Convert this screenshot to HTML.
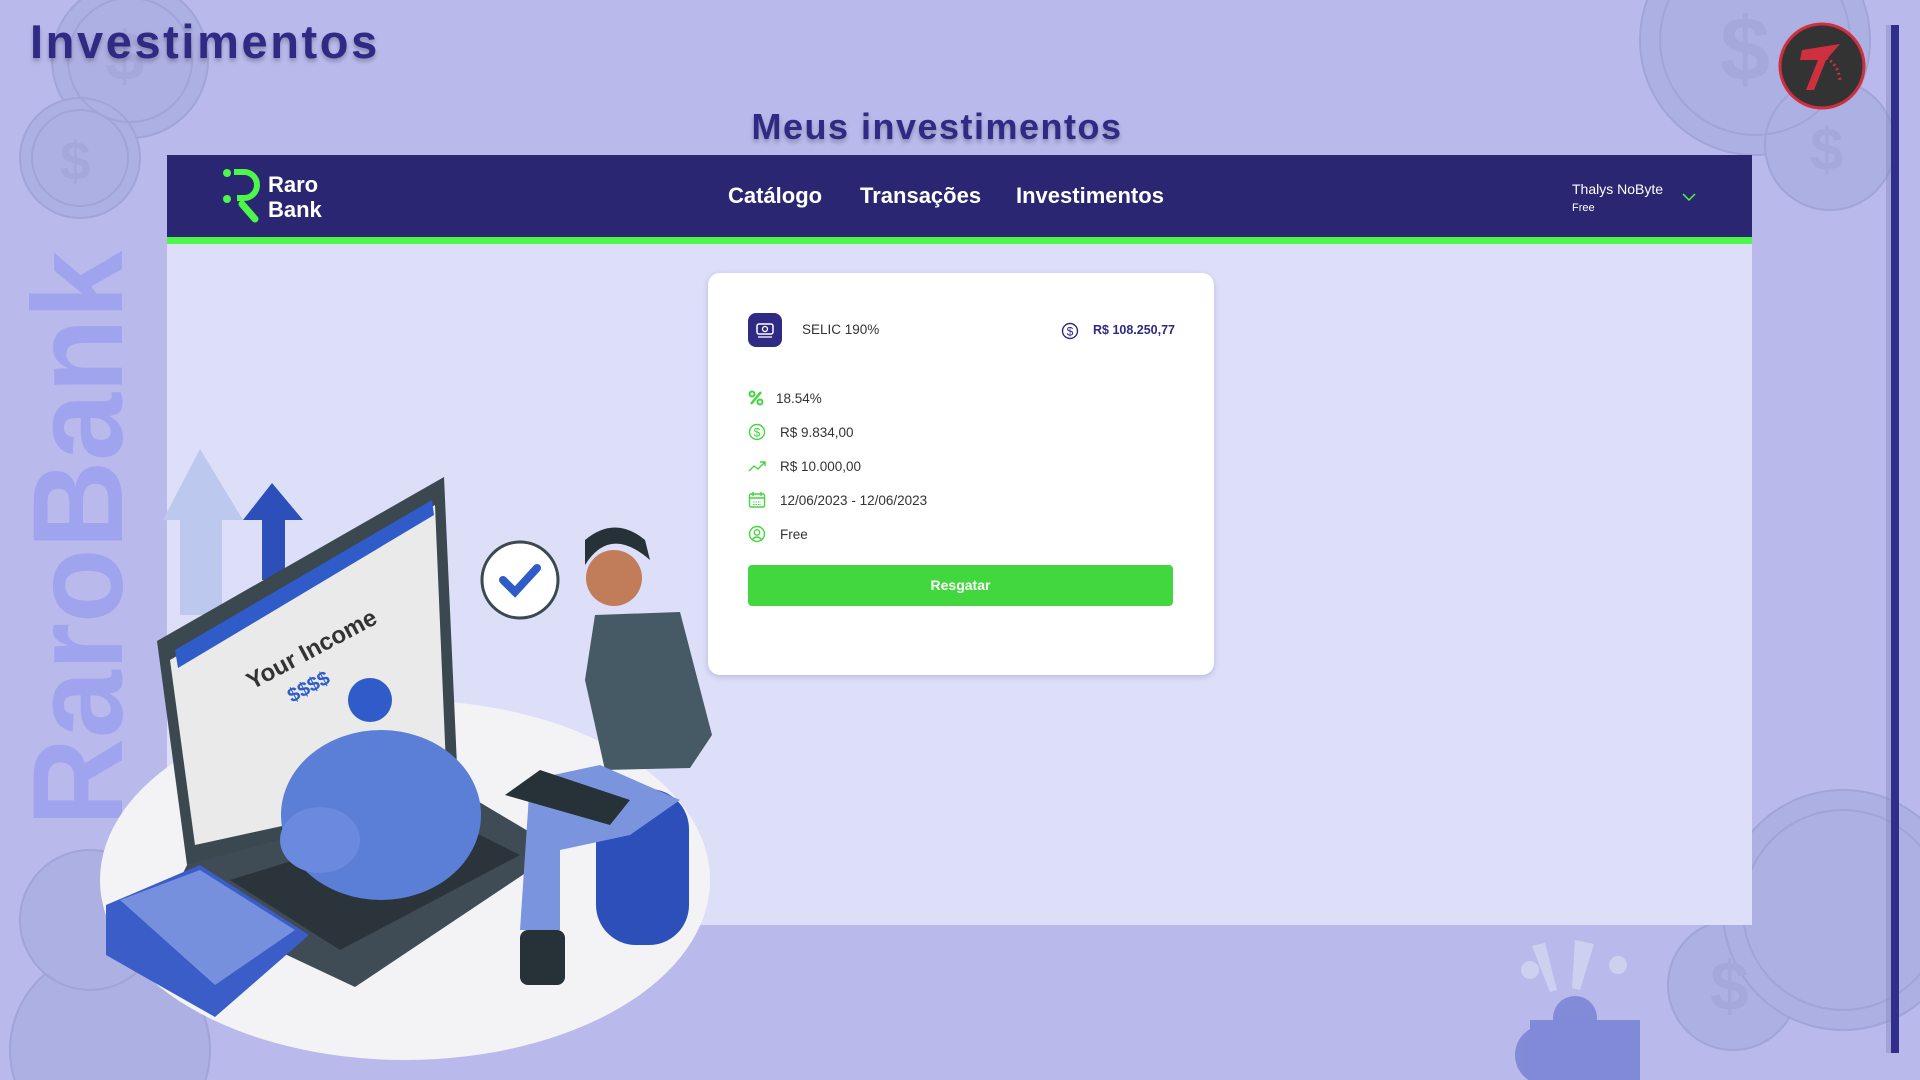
<!DOCTYPE html>
<html><head><meta charset="utf-8"><style>
*{margin:0;padding:0;box-sizing:border-box}
html,body{width:1920px;height:1080px;overflow:hidden}
body{background:#b9b9ec;font-family:"Liberation Sans",sans-serif;position:relative}
.abs{position:absolute}
h1{position:absolute;left:30px;top:14px;font-size:47px;font-weight:bold;color:#2f2a83;letter-spacing:2.6px;text-shadow:0 3px 4px rgba(0,0,0,.25)}
h2{position:absolute;left:0;width:1874px;text-align:center;top:106px;font-size:36px;font-weight:bold;color:#2f2a83;letter-spacing:1.5px;text-shadow:0 3px 4px rgba(0,0,0,.25)}
.nav{left:167px;top:155px;width:1585px;height:82px;background:#2b2672}
.green{left:167px;top:237px;width:1585px;height:7px;background:#4cf74a}
.content{left:167px;top:244px;width:1585px;height:681px;background:#dddef8}
.nl{position:absolute;top:183px;color:#fff;font-weight:bold;font-size:22px}
.card{left:708px;top:273px;width:506px;height:402px;background:#fff;border-radius:12px;box-shadow:0 2px 6px rgba(80,80,160,.25)}
.row{position:absolute;left:40px;font-size:13.5px;color:#333;display:flex;align-items:center}
.row svg{margin-right:14px}
.btn{position:absolute;left:40px;top:292px;width:425px;height:41px;background:#42d63f;border-radius:4px;color:#fff;font-weight:bold;font-size:14px;text-align:center;line-height:41px}
</style></head><body>
<svg class="abs" style="left:0;top:0" width="1920" height="1080">
 <g fill="#adb0e2" stroke="#a0a4d6" stroke-width="2">
  <circle cx="130" cy="60" r="78"/><circle cx="80" cy="158" r="60"/>
  <circle cx="1755" cy="40" r="115"/><circle cx="1830" cy="145" r="65"/>
  <circle cx="1733" cy="985" r="65"/><circle cx="1843" cy="910" r="120"/>
  <circle cx="110" cy="1050" r="100"/><circle cx="90" cy="920" r="70"/>
 </g>
 <g fill="none" stroke="#a0a4d6" stroke-width="2"><circle cx="130" cy="60" r="62"/><circle cx="80" cy="158" r="48"/><circle cx="1843" cy="910" r="100"/><circle cx="1755" cy="40" r="95"/></g>
 <g font-family="Liberation Sans" font-size="70" font-weight="bold" fill="#a4a8da"><text x="105" y="80">$</text><text x="60" y="180" font-size="55">$</text><text x="1810" y="170" font-size="60">$</text><text x="1710" y="1010" font-size="70">$</text><text x="1720" y="80" font-size="90">$</text></g>
 <rect x="1891" y="25" width="8" height="1028" fill="#312d8a"/>
 <rect x="1886" y="25" width="5" height="1028" fill="#8a8cc0" opacity=".5"/>
</svg>
<h1>Investimentos</h1>
<h2>Meus investimentos</h2>
<div class="abs nav"></div><div class="abs green"></div><div class="abs content"></div>
<svg class="abs" style="left:0;top:0" width="1920" height="1080">
 <text transform="translate(122,826) rotate(-90)" font-family="Liberation Sans" font-weight="bold" font-size="128" fill="#a0a4ef" textLength="575" lengthAdjust="spacingAndGlyphs">RaroBank</text>
 <g fill="#7c86d6" opacity=".9"><circle cx="1545" cy="1055" r="30"/><circle cx="1575" cy="1018" r="22"/><circle cx="1600" cy="1060" r="30"/><rect x="1530" y="1020" width="110" height="60"/></g>
 <g fill="#d4d6f2" opacity=".8"><polygon points="1532,946 1545,943 1557,990 1550,992"/><polygon points="1575,940 1594,944 1580,990 1572,988"/><circle cx="1530" cy="970" r="9"/><circle cx="1618" cy="965" r="9"/></g>
 <ellipse cx="405" cy="880" rx="305" ry="180" fill="#f3f3f5"/>
 <polygon points="163,520 200,449 243,520 222,520 222,615 180,615 180,520" fill="#bcc8ee"/>
 <polygon points="243,520 272,483 303,520 285,520 285,580 262,580 262,520" fill="#2c4fba"/>
 <polygon points="157,641 444,477 459,810 187,865" fill="#3b4850"/>
 <polygon points="170,660 435,505 447,790 195,845" fill="#eaeaea"/>
 <polygon points="175,650 432,500 434,515 178,668" fill="#2f5cc8"/>
 <text transform="translate(252,690) rotate(-28)" font-family="Liberation Sans" font-weight="bold" font-size="24" fill="#333">Your Income</text>
 <text transform="translate(292,703) rotate(-28)" font-family="Liberation Sans" font-weight="bold" font-size="20" fill="#2f5cc8">$$$$</text>
 <polygon points="187,865 459,790 560,850 355,987 170,900" fill="#3f4b55"/>
 <polygon points="230,880 440,815 520,855 340,950" fill="#2b343b"/>
 <ellipse cx="381" cy="815" rx="100" ry="85" fill="#5b7fd6"/>
 <ellipse cx="320" cy="840" rx="40" ry="33" fill="#6a8ae0"/>
 <circle cx="370" cy="700" r="22" fill="#2f5cc8"/>
 <polygon points="106,905 200,865 309,935 215,1017 106,955" fill="#3a5dc8"/>
 <polygon points="120,900 200,870 295,930 215,985" fill="#7790de"/>
 <rect x="596" y="789" width="93" height="156" rx="40" fill="#2c4fba"/>
 <circle cx="520" cy="580" r="38" fill="#fff" stroke="#3b4850" stroke-width="3"/>
 <path d="M503 580 l12 12 l22 -24" stroke="#2f5cc8" stroke-width="8" fill="none" stroke-linecap="round"/>
 <circle cx="614" cy="578" r="28" fill="#c17c5a"/>
 <path d="M585 565 q25 -40 65 -5 l-5 -20 q-30 -25 -60 0z" fill="#263238"/>
 <polygon points="595,615 680,612 712,735 690,768 605,770 585,680" fill="#455a64"/>
 <polygon points="530,780 600,765 680,800 630,835 560,850 560,930 520,930" fill="#7a95de"/>
 <polygon points="505,795 540,770 630,800 610,825" fill="#263238"/>
 <rect x="520" y="930" width="45" height="55" rx="8" fill="#263238"/>
</svg>
<svg class="abs" style="left:220px;top:168px" width="42" height="58" viewBox="0 0 42 58">
 <circle cx="7" cy="5" r="4" fill="#4cf74a"/><circle cx="7" cy="31" r="4" fill="#4cf74a"/>
 <path d="M14 4 h10 a13 13 0 0 1 0 26 h-7" stroke="#4cf74a" stroke-width="6" fill="none"/>
 <path d="M22 36 l13 15" stroke="#4cf74a" stroke-width="7" stroke-linecap="round"/>
</svg>
<div class="abs" style="left:268px;top:172px;color:#fff;font-weight:bold;font-size:22px;line-height:25px">Raro<br>Bank</div>
<div class="nl" style="left:728px">Catálogo</div>
<div class="nl" style="left:860px">Transações</div>
<div class="nl" style="left:1016px">Investimentos</div>
<div class="abs" style="left:1572px;top:181px;color:#fff;font-size:14px">Thalys NoByte</div>
<div class="abs" style="left:1572px;top:202px;color:#fff;font-size:11px">Free</div>
<svg class="abs" style="left:1682px;top:192px" width="14" height="10"><path d="M1 2 l6 6 l6 -6" stroke="#4cf74a" stroke-width="1.5" fill="none"/></svg>
<svg class="abs" style="left:1776px;top:20px" width="92" height="92">
 <circle cx="46" cy="46" r="42" fill="#333" stroke="#d0303e" stroke-width="3"/>
 <polygon points="26,30 64,24 50,40 38,70 30,70 42,40 24,40" fill="#d0303e"/>
 <path d="M50 38 q12 6 14 22" stroke="#d0303e" stroke-width="3" stroke-dasharray="2 3" fill="none"/>
</svg>
<div class="abs card">
 <div class="abs" style="left:40px;top:40px;width:34px;height:34px;background:#2f2a83;border-radius:8px">
  <svg width="34" height="34"><rect x="9" y="11" width="16" height="10" rx="2" stroke="#fff" stroke-width="1.5" fill="none"/><circle cx="17" cy="16" r="2.5" stroke="#fff" stroke-width="1.3" fill="none"/><path d="M10 24 h14" stroke="#fff" stroke-width="1.3"/></svg>
 </div>
 <div class="abs" style="left:94px;top:49px;font-size:13.5px;color:#333">SELIC 190%</div>
 <svg class="abs" style="left:353px;top:49px" width="18" height="18"><circle cx="9" cy="9" r="7.5" stroke="#2f2a83" stroke-width="1.4" fill="none"/><text x="9" y="13.5" text-anchor="middle" font-family="Liberation Sans" font-size="12" fill="#2f2a83">$</text></svg>
 <div class="abs" style="left:385px;top:50px;font-size:12.5px;font-weight:bold;color:#2f2a83">R$ 108.250,77</div>
 <div class="row" style="top:117px"><svg width="16" height="16"><circle cx="4" cy="4" r="2.5" stroke="#42d63f" stroke-width="2" fill="none"/><circle cx="12" cy="12" r="2.5" stroke="#42d63f" stroke-width="2" fill="none"/><path d="M3 14 L13 2" stroke="#42d63f" stroke-width="2.5"/></svg><span style="margin-left:-2px">18.54%</span></div>
 <div class="row" style="top:150px"><svg width="18" height="18"><circle cx="9" cy="9" r="7.5" stroke="#42d63f" stroke-width="1.4" fill="none"/><text x="9" y="13.5" text-anchor="middle" font-family="Liberation Sans" font-size="12" fill="#42d63f">$</text></svg>R$ 9.834,00</div>
 <div class="row" style="top:184px"><svg width="18" height="18"><path d="M1 14 l5 -5 l4 3 l7 -7 M12 5 h5 v4" stroke="#42d63f" stroke-width="1.4" fill="none"/></svg>R$ 10.000,00</div>
 <div class="row" style="top:218px"><svg width="18" height="18"><rect x="1.5" y="3" width="15" height="13" rx="1.5" stroke="#42d63f" stroke-width="1.4" fill="none"/><path d="M1.5 7 h15 M5 1 v4 M13 1 v4" stroke="#42d63f" stroke-width="1.4"/><path d="M5 11 h8 M5 13.5 h8" stroke="#42d63f" stroke-width="1" stroke-dasharray="1.5 1"/></svg>12/06/2023 - 12/06/2023</div>
 <div class="row" style="top:252px"><svg width="18" height="18"><circle cx="9" cy="9" r="7.5" stroke="#42d63f" stroke-width="1.4" fill="none"/><circle cx="9" cy="7.5" r="2.7" stroke="#42d63f" stroke-width="1.4" fill="none"/><path d="M4.5 14.5 q4.5 -5 9 0" stroke="#42d63f" stroke-width="1.4" fill="none"/></svg>Free</div>
 <div class="btn">Resgatar</div>
</div>
</body></html>
